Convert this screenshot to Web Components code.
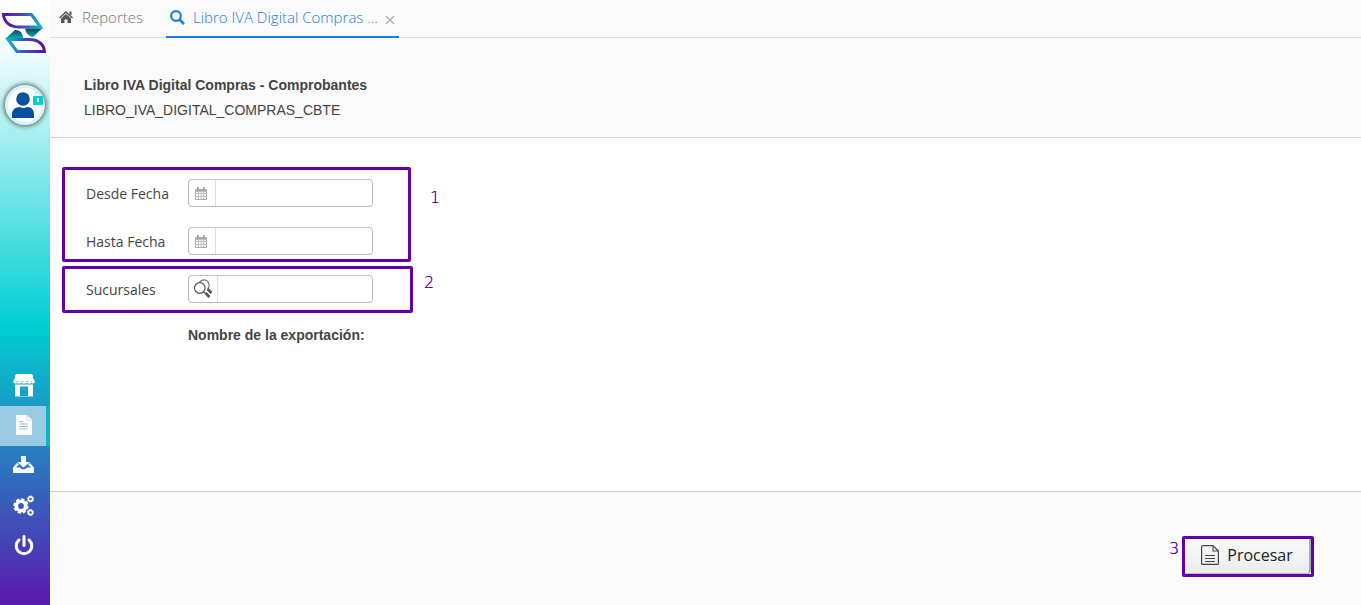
<!DOCTYPE html>
<html lang="es">
<head>
<meta charset="utf-8">
<title>Libro IVA Digital Compras - Comprobantes</title>
<style>
  html, body { margin: 0; background: #fff; }
  body { font-family: "Open Sans", sans-serif; color: #444; }
</style>
</head>
<body>
<report-app></report-app>

<script>
const define = (name, html) => {
  const template = document.createElement('template');
  template.innerHTML = html;
  customElements.define(name, class extends HTMLElement {
    constructor() {
      super();
      this.attachShadow({ mode: 'open' }).append(template.content.cloneNode(true));
    }
  });
};

define('side-bar', `
<style>
  :host { display: flex; flex-direction: column; width: 50px; flex: none; box-sizing: border-box; padding: 12px 0 39px;
    background: linear-gradient(180deg, #fff 0%, #fcffff 6%, #00ced1 54%, #5a1aad 100%); }
  svg { display: block; }
  a { display: block; }
  .logo { height: 44px; }
  .user { width: 40px; height: 40px; box-sizing: border-box; margin: 29px 0 0 5px; padding: 0; border: 3px solid #d2f6f6; border-radius: 50%;
    background: #fff; box-shadow: 0 0 5px 1px #555; }
  nav { margin-top: auto; display: flex; flex-direction: column; }
  nav a { height: 40px; display: flex; align-items: center; width: 46px; box-sizing: border-box; padding-left: 12px; }
  nav a.on { background: #9bcbe2; box-shadow: 4px 0 0 #12b3c8; }
</style>
<a class="logo" href="#" aria-label="Inicio">
  <svg width="50" height="44" viewBox="0 0 50 44">
    <defs>
      <linearGradient id="a"><stop offset="0" stop-color="#5a0fa8"/><stop offset=".5" stop-color="#4848b8"/><stop offset="1" stop-color="#08b6c6"/></linearGradient>
      <linearGradient id="b"><stop offset="0" stop-color="#08b6c6"/><stop offset=".5" stop-color="#4848b8"/><stop offset="1" stop-color="#5a0fa8"/></linearGradient>
      <linearGradient id="c" x1="0" x2="0" y1="0" y2="1"><stop offset="0" stop-color="#0a4658"/><stop offset="1" stop-color="#06a8b2"/></linearGradient>
    </defs>
    <path d="M3.500 2.500H31.500L40.500 15H19C10 15 4 10 3.500 2.500Z" fill="none" stroke="url(#a)" stroke-width="3"/>
    <path d="M8 27.500H29C38 27.500 44 32 44.500 39.500H17Z" fill="none" stroke="url(#b)" stroke-width="3"/>
    <path d="M25 16.500H42L33 25C28 24 26 21 25 16.500Z" fill="url(#c)"/>
    <path d="M6 26L15 18C20 18 23 21 23 26Z" fill="url(#c)"/>
  </svg>
</a>
<a class="user" href="#" aria-label="Usuario">
  <svg width="36" height="34" viewBox="0 0 36 34">
    <circle cx="15" cy="11" r="6.8" fill="#0750a0"/>
    <path d="M4 30V27Q4 19 12 19Q15 21 19 19Q26 19 26 27V30Z" fill="#0750a0"/>
    <rect x="25" y="8" width="10" height="9" rx="1" fill="#08cdd0"/>
    <path d="M27 8V6Q30 2 33 6V8" fill="none" stroke="#a0eeee" stroke-width="1.2"/>
    <path d="M30 10V14" stroke="#e4ffff" stroke-width="2"/>
  </svg>
</a>
<nav>
  <a href="#" aria-label="Comercio"><svg width="24" height="24" viewBox="0 0 24 24" fill="#fff">
    <path d="M4 0H20L21 2V4H3V2ZM3 4H21L23 7.500Q22 10.500 19.500 9Q17 10.500 15 9Q12 10.500 9.500 9Q7 10.500 5 9Q2 10.500 1 7.500Z"/>
    <path fill-rule="evenodd" d="M3 10.500H21V22.500H3ZM8 12.500V22H16V12.500Z"/>
    <path d="M4 7.500H20" stroke="#8bd0de" stroke-width="1" stroke-dasharray="3 2"/></svg></a>
  <a class="on" href="#" aria-label="Reportes"><svg width="24" height="24" viewBox="0 0 24 24">
    <path d="M4 1H15L20 6V21H4Z" fill="#fff"/><path d="M15 1V6H20" fill="none" stroke="#c4e1ee"/>
    <path d="M7 7.500H11M7 10H16M7 12.500H16M7 15H16" stroke="#8fc4df" stroke-width="1.200"/></svg></a>
  <a href="#" aria-label="Descargas"><svg width="24" height="24" viewBox="0 0 24 24" fill="#fff">
    <path d="M9 2H14V8H18L11.500 13.500L5 8H9Z"/><path d="M1 13.500L5 9L7 10.500L4 13.500H8Q11.500 17.500 15 13.500H19L16 10.500L18 9L22 13.500V19H1Z"/></svg></a>
  <a href="#" aria-label="Configuración"><svg width="24" height="24" viewBox="0 0 24 24" fill="none" stroke="#fff">
    <circle cx="9" cy="12" r="4.700" stroke-width="3.600"/><circle cx="9" cy="12" r="6.800" stroke-width="1.800" stroke-dasharray="3.300 2.040"/>
    <circle cx="18.500" cy="5" r="2.100" stroke-width="1.600"/><circle cx="18.500" cy="5" r="3" stroke-width="1" stroke-dasharray="1.400 .956"/>
    <circle cx="18.500" cy="18.500" r="2.100" stroke-width="1.600"/><circle cx="18.500" cy="18.500" r="3" stroke-width="1" stroke-dasharray="1.400 .956"/></svg></a>
  <a href="#" aria-label="Salir"><svg width="24" height="24" viewBox="0 0 24 24" fill="none" stroke="#fff" stroke-width="3" stroke-linecap="round">
    <path d="M12 2.500V11.500"/><path d="M7 6A7.800 7.800 0 1 0 17 6"/></svg></a>
</nav>`);

define('tab-bar', `
<style>
  :host { display: flex; height: 38px; background: #fafafa; box-shadow: inset 0 -1px #ddd; font-size: 15px; font-weight: 300; line-height: 20px; }
  a { display: flex; align-items: center; box-sizing: border-box; color: #777; text-decoration: none; padding: 0 8px 4px; }
  a svg { margin-right: 8px; flex: none; }
  .tab { display: flex; margin-left: 15px; border-bottom: 2px solid #1a7ee0; }
  .tab a { color: #1a7ee0; padding: 0 0 2px 4px; }
  button { border: 0; background: none; padding: 3px 4px 0 7px; margin: 0; width: 21px; display: flex; align-items: center; }
</style>
<a href="#"><svg width="16" height="14" viewBox="0 0 16 14" fill="#555"><path d="M8 1L15 7.500L14 8.500L8 3L2 8.500L1 7.500ZM11.500 1.500H13.500V5.500L11.500 4ZM8 4L13 8.500V13H9.500V9.500H6.500V13H3V8.500Z"/></svg><span>Reportes</span></a>
<div class="tab">
  <a href="#"><svg width="15" height="15" viewBox="0 0 15 15" fill="none" stroke="#1a7ee0"><circle cx="6" cy="6" r="4.800" stroke-width="2.200"/><path d="M9.500 9.500L14 14" stroke-width="2.600"/></svg><span>Libro IVA Digital Compras ...</span></a>
  <button type="button" aria-label="Cerrar"><svg width="10" height="10" viewBox="0 0 10 10"><path d="M1 1L9 9M9 1L1 9" stroke="#aaa" stroke-width="1.100"/></svg></button>
</div>`);

define('report-header', `
<style>
  :host { display: block; background: #fafafa; border-bottom: 1px solid #d4d4d4; padding: 35px 34px 14px; font: 14px/25px "Liberation Sans", sans-serif; color: #444; }
  h1, p { margin: 0; font-size: 14px; }
</style>
<h1><slot name="title"></slot></h1><p><slot></slot></p>`);

customElements.define('note-box', class extends HTMLElement {
  connectedCallback() {
    if (this.shadowRoot) return;
    this.attachShadow({ mode: 'open' }).innerHTML = `
<style>
  :host { display: block; position: relative; box-sizing: border-box; border: 3px solid #6400aa; border-radius: 2px; }
  b { position: absolute; left: var(--note-x); top: var(--note-y); font: 200 16px/20px "DejaVu Sans", sans-serif; color: #6400aa; text-shadow: 0 0 0 #6400aa; }
</style>
<slot></slot><b>${this.getAttribute('number')}</b>`;
  }
});

const CALENDAR = `<svg width="14" height="14" viewBox="0 0 14 14" fill="none" stroke="#aaa"><path d="M1.500 3H12.500V12.500H1.500Z"/><path d="M1 6.500H13M1 9.500H13M4.500 5V12.500M7 5V12.500M9.500 5V12.500" stroke="#bbb"/><path d="M1 3.500H13" stroke-width="2.500"/><path d="M4 0V3M10 0V3" stroke-width="2"/></svg>`;
const SEARCH = `<svg width="20" height="20" viewBox="0 0 20 20" fill="none" stroke="#555"><path d="M6 4A5.300 5.300 0 1 1 14.500 10" stroke-width="1.200" stroke="#777"/><path d="M14.500 10L18.500 14" stroke-width="2.600"/><circle cx="6.800" cy="9" r="5.300" fill="#fff" stroke-width="1.200"/><path d="M10.500 13L12.500 14.500" stroke-width="1.300"/><path d="M12.500 14L16.500 18" stroke-width="2.800"/></svg>`;

customElements.define('form-field', class extends HTMLElement {
  connectedCallback() {
    if (this.shadowRoot) return;
    const search = this.getAttribute('kind') === 'search';
    this.attachShadow({ mode: 'open' }).innerHTML = `
<style>
  :host { display: flex; height: 28px; align-items: center; font-size: 14px; line-height: 20px; }
  label { width: 102px; flex: none; color: #444; padding-top: 2px; box-sizing: border-box; }
  .group { display: flex; box-sizing: border-box; width: 185px; height: 28px; border: 1px solid #bbb; border-radius: 4px; background: #fff; overflow: hidden; }
  button { width: ${search ? 29 : 27}px; flex: none; box-sizing: border-box; border: 0; border-right: 1px solid #ddd; background: none; padding: ${search ? 0 : '2px 2px 0 0'}; margin: 0; display: flex; align-items: center; justify-content: center; }
  input { flex: 1; min-width: 0; border: 0; padding: 0 6px; font: inherit; background: none; outline: 0; }
</style>
<label for="f">${this.getAttribute('label')}</label>
<div class="group"><button type="button" aria-label="${search ? 'Buscar' : 'Calendario'}">${search ? SEARCH : CALENDAR}</button><input id="f" type="text"></div>`;
  }
});

define('action-button', `
<style>
  :host { display: flex; }
  button { display: flex; align-items: center; justify-content: center; width: 100%; height: 35px; box-sizing: border-box; margin: 0; padding: 0 0 2px; gap: 8px; color: #222;
    font: 16px/22px "Open Sans", sans-serif; border: 0; border-right: 2px solid #aaa; border-bottom: 1px solid #bbb; border-radius: 0 0 4px 0; background: linear-gradient(#fafafa, #ececec); }
</style>
<button type="button"><svg width="18" height="20" viewBox="0 0 18 20" fill="none" stroke="#444"><path d="M2 .6H12L17.400 6V18.500Q17.400 19.400 16.500 19.400H1.500Q.6 19.400 .6 18.500V1.500Q.6 .6 2 .6Z" stroke-width="1.200"/><path d="M12 1V6H17" stroke-width="1.100"/><path d="M4 10.500H14M4 13.500H14M4 16.500H14" stroke-width="1"/></svg><slot></slot></button>`);

define('report-app', `
<style>
  :host { display: flex; min-height: 100vh; }
  .page { flex: 1; min-width: 0; display: flex; flex-direction: column; }
  form { flex: 1; padding: 29px 12px; }
  .dates { width: 349px; padding: 9px 21px 4px; display: flex; flex-direction: column; gap: 20px; --note-x: 365px; --note-y: 18px; }
  .branch { width: 351px; margin-top: 4px; padding: 6px 21px 7px; --note-x: 359px; --note-y: 4px; }
  h2 { margin: 12px 0 0 126px; font: bold 14px/20px "Liberation Sans", sans-serif; color: #444; }
  footer { display: flex; justify-content: flex-end; align-items: flex-start; background: #fafafa; border-top: 1px solid #d4d4d4; padding: 44px 47px 28px; }
  .run { width: 132px; --note-x: -16px; --note-y: 0px; }
</style>
<side-bar></side-bar>
<div class="page">
  <tab-bar></tab-bar>
  <report-header><span slot="title">Libro IVA Digital Compras - Comprobantes</span>LIBRO_IVA_DIGITAL_COMPRAS_CBTE</report-header>
  <form>
    <note-box class="dates" number="1">
      <form-field label="Desde Fecha"></form-field>
      <form-field label="Hasta Fecha"></form-field>
    </note-box>
    <note-box class="branch" number="2"><form-field label="Sucursales" kind="search"></form-field></note-box>
    <h2>Nombre de la exportación:</h2>
  </form>
  <footer><note-box class="run" number="3"><action-button>Procesar</action-button></note-box></footer>
</div>`);
</script>
</body>
</html>
